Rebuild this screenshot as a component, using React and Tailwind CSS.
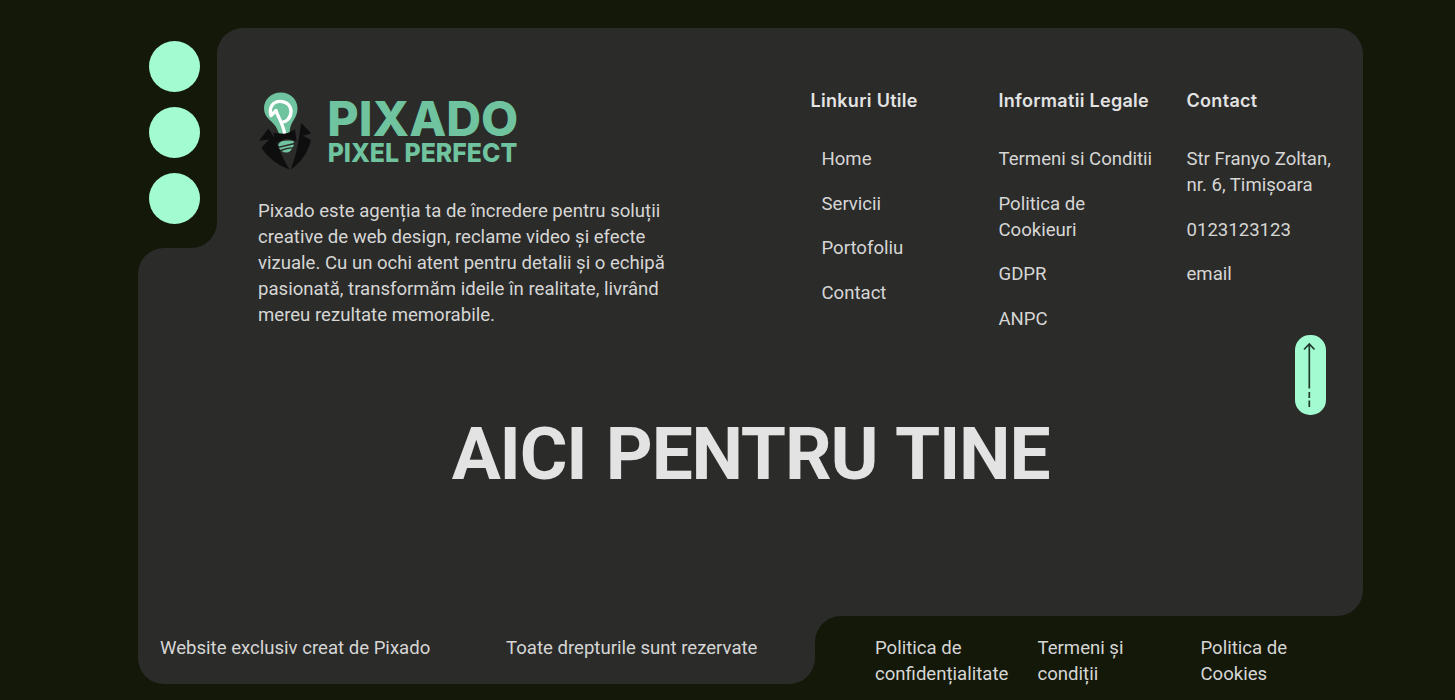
import React from 'react';

const utile = ['Home', 'Servicii', 'Portofoliu', 'Contact'];
const legale = ['Termeni si Conditii', 'Politica de Cookieuri', 'GDPR', 'ANPC'];
const contact = ['Str Franyo Zoltan, nr. 6, Timișoara', '0123123123', 'email'];

function Logo() {
  return (
    <svg width="270" height="80" viewBox="0 0 270 80" className="overflow-visible" aria-label="Pixado Pixel Perfect">
      <path d="M22.800 .5C13 .5 6 7.500 6 16.500C6 27 16 29 19 37L21 41.500L31.500 41.500L32 37C33 29 39.500 26 39.500 16.500C39.500 7.500 32.500 .5 22.800 .5Z" fill="#6fc39e" />
      <path d="M13 23.500C10.500 15 15.500 9.300 22 9.300C29 9.300 33.300 14 33 20C32.500 26.500 28 30.500 23.500 30M13 23.500L18 18.500C19.500 24 25 32 26.500 41" fill="none" stroke="#fff" strokeWidth="3.300" strokeLinecap="round" strokeLinejoin="round" />
      <path d="M10.300 36.500L1 48.800L11 47.600L3.500 55.800C10 66 20 73.500 31.500 77.500C25.500 68 21 57 17 46.500Z" fill="#0e0e0e" />
      <path d="M43.200 31L53.200 41.300L45 43.800L53 48C50 60 43 71 32.700 77.500C37 66 39.500 56 41 45.500Z" fill="#0e0e0e" />
      <path d="M15.500 40.500L24 42L29 41.300L37 37.500L38.500 49L29.500 46.800L26 47.600L17.500 51.500Z" fill="#0e0e0e" />
      <path d="M20.300 52.800Q22 49 27 48.800Q32 48 35.300 49Q36.500 50 35.500 51L20.800 54.500ZM20.800 56L35.700 52.600Q36 54 34.800 55.300Q29 55 22.500 57.800ZM23.700 59Q29 57 34 56.600Q32 60.700 28.500 60.500Q25 60.500 23.700 59Z" fill="#6fc39e" />
      <text x="69.300" y="43.500" textLength="191" lengthAdjust="spacingAndGlyphs" fontFamily="Inter, sans-serif" fontWeight="800" fontSize="47.500" fill="#6fc39e">PIXADO</text>
      <text x="69.700" y="70.300" textLength="189.500" lengthAdjust="spacingAndGlyphs" fontFamily="Inter, sans-serif" fontWeight="800" fontSize="25.700" fill="#6fc39e">PIXEL PERFECT</text>
    </svg>
  );
}

function LinkColumn({ title, items, indent = '' }) {
  return (
    <div className="w-[188px] shrink-0 pr-[28px]">
      <h3 className="font-['Inter',sans-serif] text-[18px] leading-[26px] font-semibold tracking-[0.3px] whitespace-nowrap text-[#e3e3e3]">{title}</h3>
      <ul className={`mt-[32.200px] flex flex-col gap-[18.700px] ${indent}`}>
        {items.map((item) => <li key={item}>{item}</li>)}
      </ul>
    </div>
  );
}

export default function App() {
  return (
    <div className="h-[700px] overflow-hidden bg-[#141808] pt-[27.500px] pl-[138px] font-['Roboto',sans-serif] text-[18.580px] leading-[26px] text-[#d6d6d5]">
      <footer className="w-[1225px]">
        <div className="flex h-[588px]">
          <div className="flex w-[79px] shrink-0 flex-col">
            <div className="h-[220px] bg-[#2b2b2a]">
              <div className="flex h-full flex-col items-center gap-[14.900px] rounded-br-[26px] bg-[#141808] pt-[13.300px] pr-[6px]">
                <span className="size-[51.300px] rounded-full bg-[#a3fcd1]" />
                <span className="size-[51.300px] rounded-full bg-[#a3fcd1]" />
                <span className="size-[51.300px] rounded-full bg-[#a3fcd1]" />
              </div>
            </div>
            <div className="flex-1 rounded-tl-[26px] bg-[#2b2b2a]" />
          </div>
          <div className="relative w-[1146px] rounded-t-[26px] rounded-br-[26px] bg-[#2b2b2a] pt-[60.200px] pl-[41px]">
            <div className="flex h-[333px]">
              <div className="w-[552.500px] shrink-0 pt-[4.300px]">
                <Logo />
                <p className="mt-[26px] w-[420px]">Pixado este agenția ta de încredere pentru soluții creative de web design, reclame video și efecte vizuale. Cu un ochi atent pentru detalii și o echipă pasionată, transformăm ideile în realitate, livrând mereu rezultate memorabile.</p>
              </div>
              <LinkColumn title="Linkuri Utile" items={utile} indent="pl-[11px]" />
              <LinkColumn title="Informatii Legale" items={legale} />
              <LinkColumn title="Contact" items={contact} />
            </div>
            <h2 className="ml-[-120px] w-[1225px] text-center text-[73px] leading-[66px] font-bold tracking-[-1.200px] whitespace-nowrap text-[#e3e3e3] [word-spacing:2.500px]">AICI PENTRU TINE</h2>
            <button aria-label="Sus" className="absolute top-[307px] right-[37px] flex h-[80px] w-[31px] justify-center rounded-[15px] bg-[#a3fcd1] pt-[7px]">
              <svg width="16" height="68" viewBox="0 0 16 68" fill="none" stroke="#21382d" strokeWidth="1.700">
                <path d="M1 7.500L6.300 2L11.500 7.500M6.300 2V46.500M6.300 50V56M6.300 58.500V65" />
              </svg>
            </button>
          </div>
        </div>
        <div className="flex h-[68px]">
          <div className="flex w-[677px] rounded-b-[26px] bg-[#2b2b2a] pt-[19px] pl-[22px]">
            <span className="w-[346px]">Website exclusiv creat de Pixado</span>
            <span>Toate drepturile sunt rezervate</span>
          </div>
          <div className="h-[40px] w-[510px] bg-[#2b2b2a]">
            <div className="flex h-[70px] rounded-tl-[26px] bg-[#141808] pt-[19px] pl-[60px]">
              <span className="w-[162.500px] pr-[20px]">Politica de confidențialitate</span>
              <span className="w-[163px] pr-[50px]">Termeni și condiții</span>
              <span className="w-[124px] pr-[30px]">Politica de Cookies</span>
            </div>
          </div>
        </div>
      </footer>
    </div>
  );
}
